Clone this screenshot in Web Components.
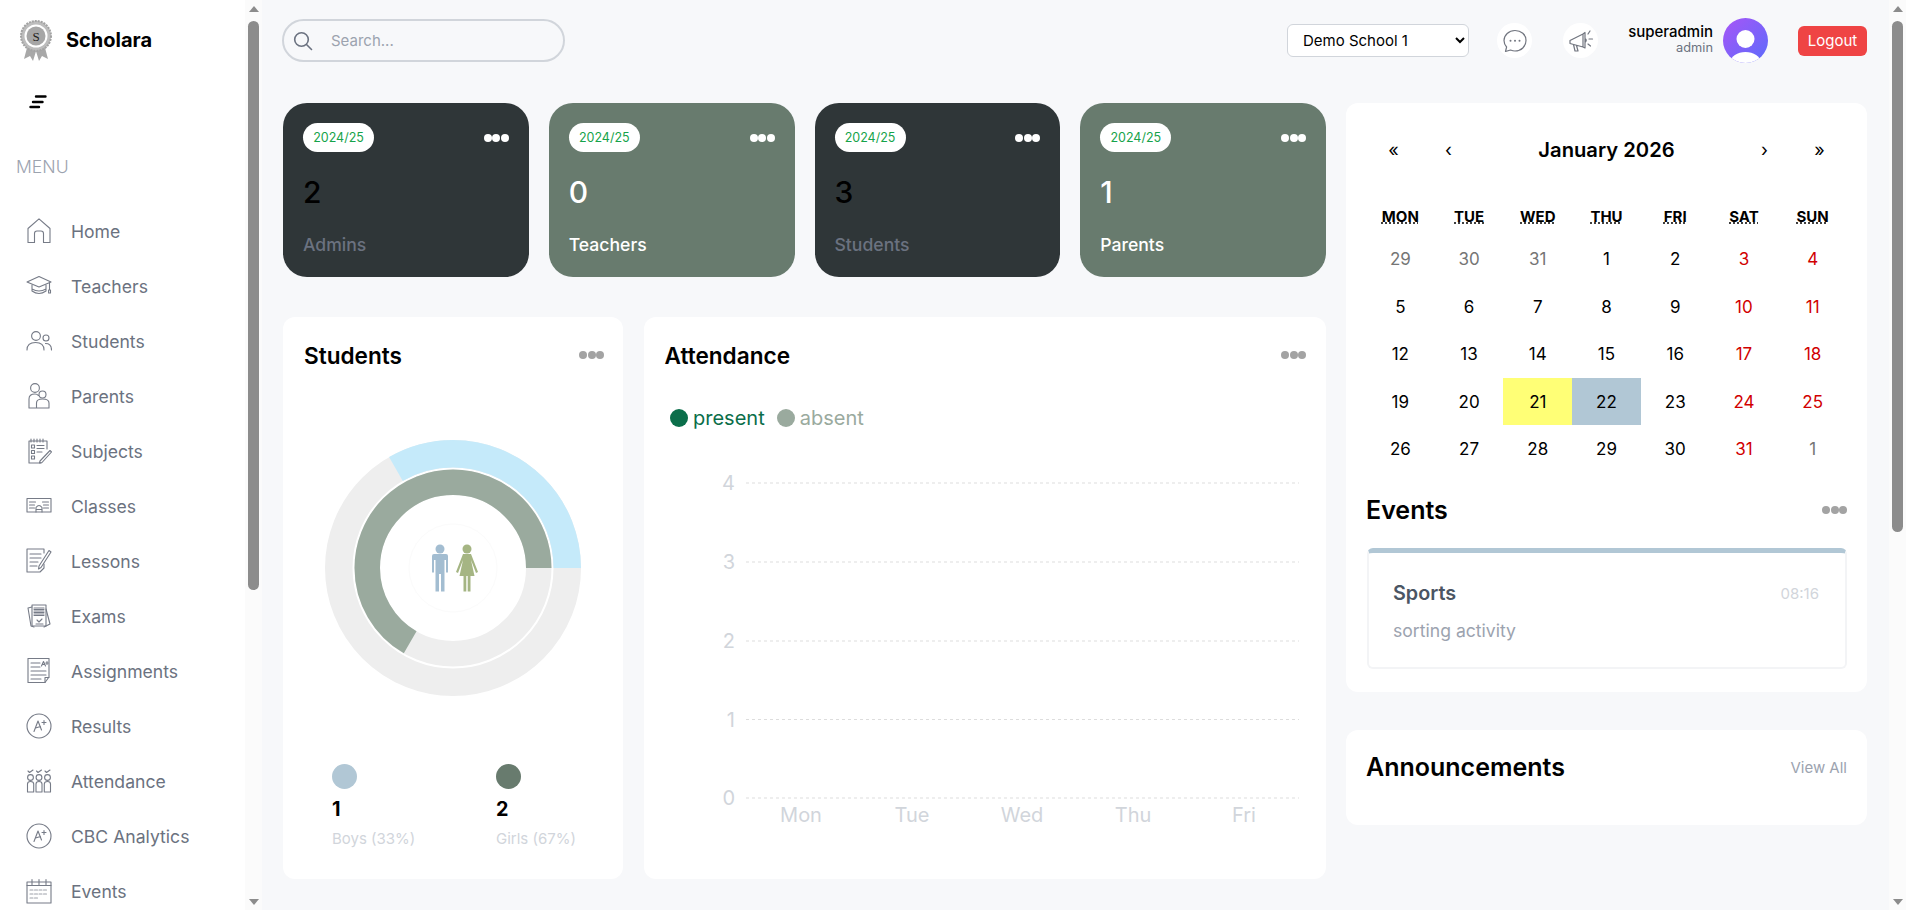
<!DOCTYPE html>
<html lang="en">
<head>
<meta charset="utf-8">
<title>Scholara</title>
<style>
  html, body { margin: 0; height: 100%; overflow: hidden; }
  body { font-family: Inter, "Liberation Sans", sans-serif; color: #000; background: #f7f8fa; }
</style>
</head>
<body>
<app-shell>
  <side-bar slot="side">
    <nav-item icon="home">Home</nav-item>
    <nav-item icon="teacher">Teachers</nav-item>
    <nav-item icon="students">Students</nav-item>
    <nav-item icon="parents">Parents</nav-item>
    <nav-item icon="subjects">Subjects</nav-item>
    <nav-item icon="classes">Classes</nav-item>
    <nav-item icon="lessons">Lessons</nav-item>
    <nav-item icon="exams">Exams</nav-item>
    <nav-item icon="assignments">Assignments</nav-item>
    <nav-item icon="results">Results</nav-item>
    <nav-item icon="attendance">Attendance</nav-item>
    <nav-item icon="results">CBC Analytics</nav-item>
    <nav-item icon="events">Events</nav-item>
  </side-bar>
  <top-bar slot="top"></top-bar>
  <stat-card slot="stats" tone="dark" count="2">Admins</stat-card>
  <stat-card slot="stats" tone="green" count="0">Teachers</stat-card>
  <stat-card slot="stats" tone="dark" count="3">Students</stat-card>
  <stat-card slot="stats" tone="green" count="1">Parents</stat-card>
  <students-card slot="charts"></students-card>
  <attendance-card slot="charts"></attendance-card>
  <events-card slot="right"></events-card>
  <announcements-card slot="right"></announcements-card>
</app-shell>

<script>
  // nav icons, all drawn on a 26x26 box
  const ICONS = {
    home: '<path d="M2 24.5V10.5L13 .8 24 10.5V24.5H17.5V15.5Q17.5 13 15 13H11Q8.5 13 8.5 15.5V24.5Z"/>',
    teacher: '<path d="M1 9 13 3.5 25 9 13 14Z"/><path d="M6 12V18Q13 23 20 18V12M6 16Q13 20 20 16"/><path d="M23.5 10V17M22.6 17h1.9v3h-1.9z"/>',
    students: '<circle cx="10" cy="8" r="4.4"/><path d="M1 22Q1 14.5 9.5 14.5 18 14.5 18 22"/><circle cx="20" cy="10" r="3"/><path d="M19.5 15.5Q25.5 15.5 25.5 22"/>',
    parents: '<circle cx="9" cy="5" r="4.4"/><circle cx="16.5" cy="11.5" r="3.5"/><path d="M3 25V16Q3 11 9 11 11 11 12.5 12.5M3 25H23V20Q23 16 16.5 16 10.5 16 10.5 20V25"/>',
    subjects: '<path d="M21 11V3H3V25H15"/><path d="M5 1v3M8 1v3M11 1v3M14 1v3M17 1v3"/><path d="M5.5 7h3v3h-3zM5.5 12.5h3v3h-3zM5.5 18h3v3h-3zM11 7.500h7M11 10.500h7M11 14h5"/><path d="M14 23 24 12.500 25.500 14 16 24.500 13.500 25Z"/>',
    classes: '<path d="M1 5.500H25V19H1Z"/><path d="M3.500 9h6M3.500 12h5M3.500 15h5M16.500 9h6M17.500 12h5M17.500 15h5"/><path d="M10 19V14.500Q13 10.500 16 14.500V19M10 16.500h6"/>',
    lessons: '<path d="M18 5V1H1V24H14L18 20V16"/><path d="M4 6h11M4 10h11M4 14h8M4 18h7"/><path d="M13 18 23 2.500 25 4 15 19.500 12.500 21Z"/>',
    exams: '<path d="M6 4 2 5 5 23 8 24M20 6 24 21 18 24"/><path d="M6 2H20V23H6Z"/><path d="M8 5h10M8 6.500h10M8 8h10M8 9.500h10M8 11h10M8 12.500h10"/><path d="M11 17l2 2 3-3M10 21h7"/>',
    assignments: '<path d="M2 .5H23V19L19 24.500H2Z"/><path d="M23 19.500H19V24.500"/><path d="M5 5h9M5 9h9M5 13h15M5 17h15M5 21h10"/><path d="M15.500 8 17.500 3.500 19.500 8M16.300 6.500h2.500M21 3.500v3M19.800 5h2.400"/>',
    results: '<circle cx="13" cy="13" r="12"/><path d="M8 18.500 12 8 15.500 17M9.500 15 14.500 13.500M18 7.500v4M16 9.500h4"/>',
    attendance: '<path d="M2 3l1.500 1.500L7 2M10.500 3l1.500 1.500L15.500 2M19 3l1.500 1.500L24 2"/><circle cx="4.500" cy="9.500" r="2.900"/><circle cx="13" cy="9.500" r="2.900"/><circle cx="21.500" cy="9.500" r="2.900"/><path d="M1.500 24V16Q1.500 13.500 4.500 13.500 7.700 13.500 7.700 16V24ZM10 24V16Q10 13.500 13 13.500 16 13.500 16 16V24ZM18.300 24V16Q18.300 13.500 21.500 13.500 24.500 13.500 24.500 16V24Z"/>',
    events: '<path d="M1 4H25V25H1Z"/><path d="M6 1.500v5M13 1.500v5M20 1.500v5M1 7.500H25"/><path d="M4 12h18M4 16h18M4 20h9" stroke-dasharray="3 1.500" opacity=".7"/>'
  };

  class MoreDots extends HTMLElement {
    connectedCallback() {
      const color = this.getAttribute('color') || '#a3a3a3';
      this.attachShadow({ mode: 'open' }).innerHTML = `
        <style>
          :host { display: inline-flex; gap: .5px; }
          i { width: 8px; height: 8px; border-radius: 50%; background: ${color}; }
        </style>
        <i></i><i></i><i></i>`;
    }
  }

  class ScrollBar extends HTMLElement {
    connectedCallback() {
      const thumb = this.getAttribute('thumb');
      this.attachShadow({ mode: 'open' }).innerHTML = `
        <style>
          :host { display: flex; flex-direction: column; width: 17px; flex: none; height: 910px; background: #fbfbfb; }
          .arrow { height: 17px; flex: none; display: flex; align-items: center; justify-content: center; }
          .arrow i { border-left: 5px solid transparent; border-right: 5px solid transparent; }
          .up i { border-bottom: 6px solid #8c8c8c; }
          .down i { border-top: 6px solid #8c8c8c; }
          .thumb { width: 11px; height: ${thumb}px; flex: none; margin: 4px 0 0 3px; border-radius: 6px; background: #8c8c8c; }
          .fill { flex: 1; }
        </style>
        <div class="arrow up"><i></i></div>
        <div class="thumb"></div>
        <div class="fill"></div>
        <div class="arrow down"><i></i></div>`;
    }
  }

  class NavItem extends HTMLElement {
    connectedCallback() {
      const icon = ICONS[this.getAttribute('icon')];
      this.attachShadow({ mode: 'open' }).innerHTML = `
        <style>
          :host { display: flex; align-items: center; height: 55px; flex: none; padding-left: 26px; gap: 19px; font-size: 17.600px; color: #6b7280; }
          svg { width: 26px; height: 26px; flex: none; fill: none; stroke: #767b87; stroke-width: 1.100; stroke-linecap: round; stroke-linejoin: round; }
        </style>
        <svg viewBox="0 0 26 26">${icon}</svg>
        <slot></slot>`;
    }
  }

  class SideBar extends HTMLElement {
    constructor() {
      super();
      this.attachShadow({ mode: 'open' }).innerHTML = `
        <style>
          :host { display: flex; flex: none; width: 262px; height: 910px; overflow: hidden; background: #fff; }
          .col { width: 245px; display: flex; flex-direction: column; flex: none; }
          .brand { display: flex; flex: none; align-items: center; gap: 14px; padding: 18px 0 0 20px; height: 44px; }
          .brand b { font-size: 20px; font-weight: 700; }
          .menu-btn { display: block; flex: none; margin: 32px 0 0 29px; width: 18px; height: 16px; }
          .label { flex: none; margin: 45px 0 24.500px 16px; font-size: 17.600px; line-height: 24px; font-weight: 300; color: #9ca3af; }
        </style>
        <div class="col">
          <div class="brand">
            <svg width="32" height="44" viewBox="0 0 32 44">
              <path d="M8 26 4 41 10 38 13 43 17 30ZM24 26 28 41 22 38 19 43 15 30Z" fill="#a8a8a8"/>
              <circle cx="16" cy="18" r="15" fill="#bdbdbd" stroke="#a3a3a3" stroke-width="2" stroke-dasharray="2 1"/>
              <circle cx="16" cy="18" r="11.500" fill="#fff"/>
              <circle cx="16" cy="18" r="9.500" fill="#a6a6a6"/>
              <text x="16" y="23" text-anchor="middle" font-family="Liberation Serif, serif" font-size="13" fill="#222">S</text>
            </svg>
            <b>Scholara</b>
          </div>
          <svg class="menu-btn" viewBox="0 0 18 16" fill="none" stroke="#000" stroke-width="2.400" stroke-linecap="round">
            <path d="M7 2.500H16.500M4 8H13.500M1.500 13H10"/>
          </svg>
          <div class="label">MENU</div>
          <slot></slot>
        </div>
        <scroll-bar thumb="569"></scroll-bar>`;
    }
  }

  class TopBar extends HTMLElement {
    constructor() {
      super();
      this.attachShadow({ mode: 'open' }).innerHTML = `
        <style>
          :host { display: flex; align-items: center; height: 81px; font-size: 15px; margin-left: -1px; }
          .search { display: flex; align-items: center; box-sizing: border-box; width: 283px; height: 43px; border: 2px solid #d1d5db; border-radius: 22px; padding-left: 9px; gap: 18px; color: #9ca3af; }
          .search svg { width: 20px; height: 20px; fill: none; stroke: #6b7280; stroke-width: 1.600; stroke-linecap: round; }
          .grow { flex: 1; }
          select { width: 182px; height: 33px; box-sizing: border-box; padding: 0 8px 0 11px; border: 1px solid #d1d5db; border-radius: 6px; background: #fff; color: #000; font: 15px Inter, "Liberation Sans", sans-serif; }
          .round { width: 35px; height: 35px; border-radius: 50%; background: #fff; display: flex; align-items: center; justify-content: center; margin-left: 28px; }
          .round + .round { margin-left: 31px; }
          .round svg { width: 26px; height: 26px; fill: none; stroke: #71757f; stroke-width: 1.200; stroke-linecap: round; stroke-linejoin: round; }
          .who { display: flex; flex-direction: column; align-items: flex-end; margin-left: 30px; width: 85px; padding-bottom: 4px; }
          .who span { font-size: 15px; font-weight: 500; line-height: 18px; }
          .who small { font-size: 12.800px; line-height: 14px; color: #6b7280; }
          .avatar { width: 45px; height: 45px; margin-left: 10px; display: block; }
          .logout { margin-left: 30px; width: 69px; height: 30px; border-radius: 6px; background: #ef4444; color: #fff; display: flex; align-items: center; justify-content: center; }
        </style>
        <div class="search">
          <svg viewBox="0 0 20 20"><circle cx="8.500" cy="8.500" r="6.800"/><path d="M13.500 13.500 18.500 18.500"/></svg>
          <span>Search...</span>
        </div>
        <div class="grow"></div>
        <select><option>Demo School 1</option></select>
        <div class="round">
          <svg viewBox="0 0 26 26"><path d="M13 2.500C6.800 2.500 2 7 2 12.500 2 15 3 17.300 4.600 19L3.500 23.500 8.500 22C10 22.600 11.500 23 13 23 19.200 23 24 18.500 24 12.500S19.200 2.500 13 2.500Z"/><g fill="#71757f" stroke="none"><circle cx="8.500" cy="12.800" r="1"/><circle cx="13" cy="12.800" r="1"/><circle cx="17.500" cy="12.800" r="1"/></g></svg>
        </div>
        <div class="round">
          <svg viewBox="0 0 26 26"><path d="M2 12.500 15 6V19L2 15.500ZM15 6 17 4.500V20L15 19M5.500 16.500 7 23H10L8.500 17.500M17 10.500Q19.500 12 17 14.500M20 6l2-3M21 11h3.500M20 16l2.500 2"/></svg>
        </div>
        <div class="who"><span>superadmin</span><small>admin</small></div>
        <svg class="avatar" viewBox="0 0 45 45">
          <defs>
            <linearGradient id="av" x1="0" y1="0" x2="1" y2="1"><stop offset="0" stop-color="#a855f7"/><stop offset="1" stop-color="#5b6cfb"/></linearGradient>
            <clipPath id="clip"><circle cx="22.500" cy="22.500" r="22.500"/></clipPath>
          </defs>
          <circle cx="22.500" cy="22.500" r="22.500" fill="url(#av)"/>
          <g clip-path="url(#clip)" fill="#fff"><circle cx="22.500" cy="21" r="9"/><ellipse cx="22.500" cy="44" rx="15" ry="10"/></g>
        </svg>
        <div class="logout">Logout</div>`;
    }
  }

  class StatCard extends HTMLElement {
    connectedCallback() {
      const green = this.getAttribute('tone') === 'green';
      this.attachShadow({ mode: 'open' }).innerHTML = `
        <style>
          :host { display: block; box-sizing: border-box; height: 174px; padding: 20px; border-radius: 24px; background: ${green ? '#687b6e' : '#2f3638'}; }
          .top { display: flex; justify-content: space-between; align-items: center; height: 29px; }
          .pill { display: flex; align-items: center; justify-content: center; box-sizing: border-box; padding-bottom: 1px; width: 71px; height: 29px; border-radius: 15px; background: #fff; color: #16a34a; font-size: 12.500px; }
          .count { margin-top: 20px; font-size: 30px; line-height: 40px; font-weight: 500; color: ${green ? '#fff' : '#000'}; }
          .name { margin-top: 21px; font-size: 17.600px; line-height: 24px; font-weight: 500; color: ${green ? '#fff' : '#6b7280'}; }
        </style>
        <div class="top"><span class="pill">2024/25</span><more-dots color="#fff"></more-dots></div>
        <div class="count">${this.getAttribute('count')}</div>
        <div class="name"><slot></slot></div>`;
    }
  }

  const panelStyle = `
    :host { display: block; box-sizing: border-box; background: #fff; border-radius: 12px; }
    .head { display: flex; justify-content: space-between; align-items: center; height: 28px; font-size: 22.600px; font-weight: 600; }`;

  class StudentsCard extends HTMLElement {
    constructor() {
      super();
      this.attachShadow({ mode: 'open' }).innerHTML = `
        <style>
          ${panelStyle}
          :host { padding: 24px 19px 0 21px; height: 562px; }
          svg.ring { display: block; width: 260px; height: 260px; margin: 68.500px 0 0 19px; }
          .legend { display: grid; grid-template-columns: 164px 1fr; margin: 66.500px 0 0 28px; }
          .dot { width: 25px; height: 25px; border-radius: 50%; }
          .num { margin-top: 6px; font-size: 19.800px; line-height: 28px; font-weight: 700; }
          .cap { margin-top: 6px; font-size: 15px; line-height: 20px; color: #d1d5db; }
        </style>
        <div class="head"><span>Students</span><more-dots></more-dots></div>
        <svg class="ring" viewBox="0 0 260 260" fill="none">
          <circle cx="130" cy="130" r="114.250" stroke="#eee" stroke-width="27.500"/>
          <circle cx="130" cy="130" r="85.750" stroke="#eee" stroke-width="25.500"/>
          <g transform="translate(130 130) scale(1 -1)">
            <circle r="114.250" stroke="#c5eafa" stroke-width="27.500" pathLength="100" stroke-dasharray="33.330 100"/>
            <circle r="85.750" stroke="#9aaa9e" stroke-width="25.500" pathLength="100" stroke-dasharray="66.670 100"/>
          </g>
          <circle cx="130" cy="130" r="44" stroke="#fbfbfb"/>
          <g fill="#a3bdd1">
            <circle cx="117" cy="111" r="4.500"/>
            <path d="M109 118Q109 116 111 116H123Q125 116 125 118V134.500H123V122H121.500V153.500H118V136H116V153.500H112.500V122H111V134.500H109Z"/>
          </g>
          <g fill="#a5b583">
            <circle cx="144" cy="111" r="4.500"/>
            <path d="M140 116H148L155 134 153 135 148 122 151.500 138H147.500V153.500H144.700V138H143.300V153.500H140.500V138H136.500L140 122 135 135 133 134Z"/>
          </g>
        </svg>
        <div class="legend">
          <div><div class="dot" style="background:#b1c7d5"></div><div class="num">1</div><div class="cap">Boys (33%)</div></div>
          <div><div class="dot" style="background:#687b6e"></div><div class="num">2</div><div class="cap">Girls (67%)</div></div>
        </div>`;
    }
  }

  class AttendanceCard extends HTMLElement {
    constructor() {
      super();
      const grid = [['4', 50], ['3', 129], ['2', 208], ['1', 286.5], ['0', 365]].map(([n, y]) =>
        `<text x="91" y="${y + 7}" text-anchor="end">${n}</text><line x1="102" x2="655" y1="${y}" y2="${y}" stroke="#ddd" stroke-dasharray="3 3"/>`).join('');
      const days = [['Mon', 157], ['Tue', 268], ['Wed', 378], ['Thu', 489], ['Fri', 600]].map(([d, x]) =>
        `<text x="${x}" y="389" text-anchor="middle">${d}</text>`).join('');
      this.attachShadow({ mode: 'open' }).innerHTML = `
        <style>
          ${panelStyle}
          :host { padding-top: 24px; height: 562px; }
          .head { padding: 0 20px 0 20.500px; }
          .legend { display: flex; align-items: center; gap: 5px; height: 28px; margin: 35px 0 0 26px; font-size: 20px; padding-bottom: 1px; }
          .legend i { width: 18px; height: 18px; border-radius: 50%; }
          .legend span + i { margin-left: 7px; }
          svg { display: block; }
          svg text { font-size: 20px; fill: #d1d5db; font-family: Inter, "Liberation Sans", sans-serif; }
        </style>
        <div class="head"><span>Attendance</span><more-dots></more-dots></div>
        <div class="legend">
          <i style="background:#0b6e4a"></i><span style="color:#0b6e4a">present</span>
          <i style="background:#9aaa9e"></i><span style="color:#9aaa9e">absent</span>
        </div>
        <svg width="682" height="400" viewBox="0 0 682 400">${grid}${days}</svg>`;
    }
  }

  class SchoolCalendar extends HTMLElement {
    constructor() {
      super();
      const names = { MON: 'Monday', TUE: 'Tuesday', WED: 'Wednesday', THU: 'Thursday', FRI: 'Friday', SAT: 'Saturday', SUN: 'Sunday' };
      const heads = Object.keys(names).map(k => `<div class="wd"><abbr title="${names[k]}">${k}</abbr></div>`).join('');
      let tiles = '';
      // Monday 29 Dec 2025 through Sunday 1 Feb 2026
      for (let i = 0; i < 35; i++) {
        const out = i < 3 || i === 34;
        const day = i < 3 ? 29 + i : i === 34 ? 1 : i - 2;
        const cls = [];
        if (out) cls.push('out');
        else if (i % 7 > 4) cls.push('end');
        if (day === 21 && !out) cls.push('now');
        if (day === 22 && !out) cls.push('sel');
        tiles += `<div class="${cls.join(' ')}">${day}</div>`;
      }
      this.attachShadow({ mode: 'open' }).innerHTML = `
        <style>
          :host { display: block; width: 481px; margin-left: -1px; }
          .nav { display: grid; grid-template-columns: 55px 55px 1fr 55px 55px; height: 43px; align-items: center; text-align: center; font-size: 18px; margin-top: 25px; }
          .nav b { font-size: 20.200px; font-weight: 600; }
          .week, .days { display: grid; grid-template-columns: repeat(7, 1fr); text-align: center; }
          .week { margin: 34px 0 6.250px; font-size: 15px; font-weight: 700; line-height: 24px; }
          .days { grid-auto-rows: 47.500px; font-size: 17px; }
          .days div { display: flex; align-items: center; justify-content: center; }
          .out { color: #757575; }
          .end { color: #d10000; }
          .now { background: #ffff76; }
          .sel { background: #b1c7d5; }
        </style>
        <div class="nav"><span>«</span><span>‹</span><b>January 2026</b><span>›</span><span>»</span></div>
        <div class="week">${heads}</div>
        <div class="days">${tiles}</div>`;
    }
  }

  class EventsCard extends HTMLElement {
    constructor() {
      super();
      this.attachShadow({ mode: 'open' }).innerHTML = `
        <style>
          ${panelStyle}
          :host { height: 589px; padding: 0 20px 0 21px; }
          .head { height: 32px; margin: 21.250px 0 0 -1px; font-size: 25px; }
          .event { box-sizing: border-box; height: 121px; margin-top: 22px; padding: 26px 26px 0 24px; border: 2px solid #f3f4f6; border-top: 5px solid #b1c7d5; border-radius: 6px; }
          .row { display: flex; justify-content: space-between; align-items: center; height: 28px; font-size: 19.800px; font-weight: 600; color: #4b5563; }
          .row small { font-size: 15px; font-weight: 400; color: #d1d5db; }
          .desc { margin-top: 12px; font-size: 17.600px; line-height: 24px; color: #9ca3af; }
        </style>
        <school-calendar></school-calendar>
        <div class="head"><span>Events</span><more-dots></more-dots></div>
        <div class="event">
          <div class="row"><span>Sports</span><small>08:16</small></div>
          <div class="desc">sorting activity</div>
        </div>`;
    }
  }

  class AnnouncementsCard extends HTMLElement {
    constructor() {
      super();
      this.attachShadow({ mode: 'open' }).innerHTML = `
        <style>
          ${panelStyle}
          :host { height: 95px; padding: 21px 20px 0 20px; }
          .head { height: 32px; font-size: 25px; }
          small { font-size: 15px; font-weight: 400; color: #9ca3af; }
        </style>
        <div class="head"><span>Announcements</span><small>View All</small></div>`;
    }
  }

  class AppShell extends HTMLElement {
    constructor() {
      super();
      this.attachShadow({ mode: 'open' }).innerHTML = `
        <style>
          :host { display: flex; height: 910px; overflow: hidden; background: #f7f8fa; }
          main { flex: 1; padding: 0 22px 0 21px; }
          .top { margin-bottom: 22px; }
          .content { display: grid; grid-template-columns: 1043px 521px; gap: 20px; }
          .stats { display: grid; grid-template-columns: repeat(4, 1fr); gap: 20px; margin-bottom: 40px; }
          .charts { display: grid; grid-template-columns: 340px 682px; gap: 21px; }
          .right { display: flex; flex-direction: column; gap: 38px; }
        </style>
        <slot name="side"></slot>
        <main>
          <div class="top"><slot name="top"></slot></div>
          <div class="content">
            <div>
              <div class="stats"><slot name="stats"></slot></div>
              <div class="charts"><slot name="charts"></slot></div>
            </div>
            <div class="right"><slot name="right"></slot></div>
          </div>
        </main>
        <scroll-bar thumb="511"></scroll-bar>`;
    }
  }

  customElements.define('more-dots', MoreDots);
  customElements.define('scroll-bar', ScrollBar);
  customElements.define('nav-item', NavItem);
  customElements.define('side-bar', SideBar);
  customElements.define('top-bar', TopBar);
  customElements.define('stat-card', StatCard);
  customElements.define('students-card', StudentsCard);
  customElements.define('attendance-card', AttendanceCard);
  customElements.define('school-calendar', SchoolCalendar);
  customElements.define('events-card', EventsCard);
  customElements.define('announcements-card', AnnouncementsCard);
  customElements.define('app-shell', AppShell);
</script>
</body>
</html>
